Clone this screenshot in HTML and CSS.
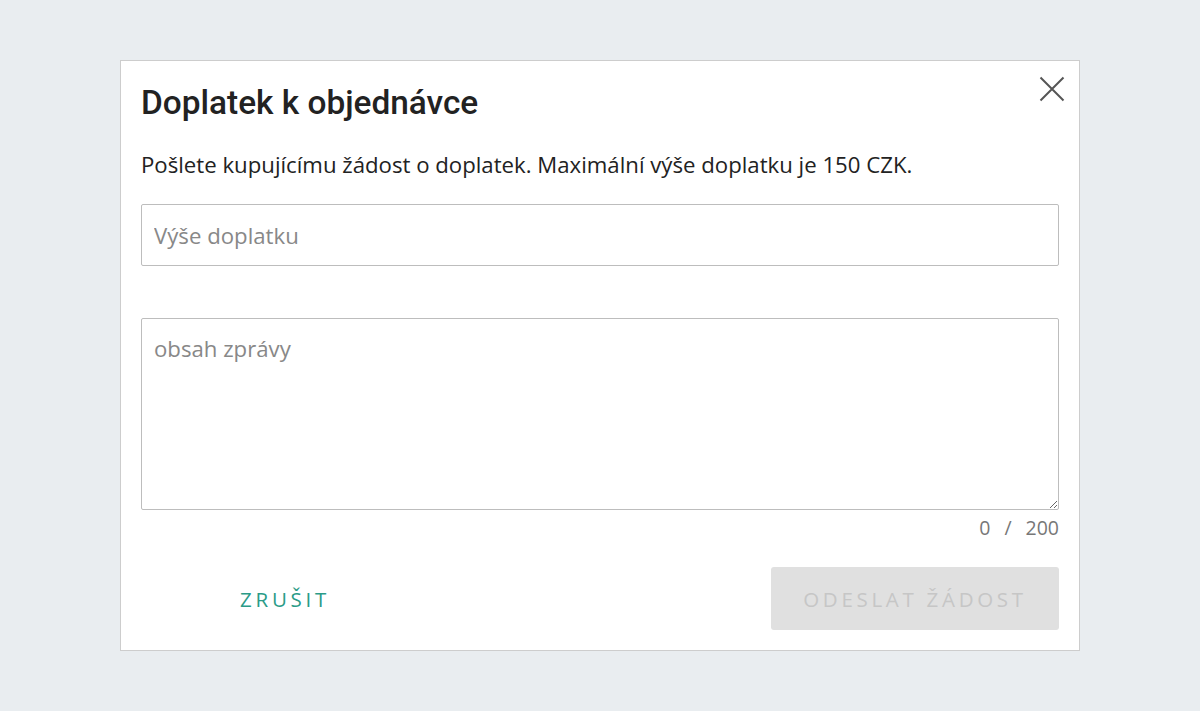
FILE: index.html
```html
<!DOCTYPE html>
<html lang="cs">
<head>
<meta charset="utf-8">
<title>Doplatek k objednávce</title>
<link rel="stylesheet" href="styles.css">
</head>
<body>
<div class="page">
  <div class="dialog">
    <button class="close" aria-label="Zavřít">
      <svg width="26" height="26" viewBox="0 0 26 26"><path d="M1.5 1.5 L24.5 24.5 M24.5 1.5 L1.5 24.5" stroke="#555" stroke-width="2" fill="none"/></svg>
    </button>
    <h1 class="title">Doplatek k objednávce</h1>
    <p class="desc">Pošlete kupujícímu žádost o doplatek. Maximální výše doplatku je 150 CZK.</p>
    <input class="field" type="text" placeholder="Výše doplatku">
    <textarea class="area" placeholder="obsah zprávy"></textarea>
    <div class="counter"><span>0</span><span>/</span><span>200</span></div>
    <div class="actions">
      <button class="btn cancel">ZRUŠIT</button>
      <button class="btn send" disabled>ODESLAT ŽÁDOST</button>
    </div>
  </div>
</div>
</body>
</html>
```
FILE: styles.css
```css
html, body {
  margin: 0;
  padding: 0;
  background: #e9edf0;
}
.page {
  width: 1200px;
  height: 711px;
  display: flex;
  justify-content: center;
  padding-top: 60px;
  box-sizing: border-box;
}
.dialog {
  position: relative;
  width: 960px;
  height: 591px;
  box-sizing: border-box;
  background: #fff;
  border: 1px solid #cdcdcd;
  padding: 24px 20px 20px 20px;
  display: flex;
  flex-direction: column;
  font-family: "Open Sans", sans-serif;
}
.close {
  position: absolute;
  top: 15px;
  right: 14px;
  width: 26px;
  height: 26px;
  padding: 0;
  border: 0;
  background: none;
  cursor: pointer;
}
.title {
  margin: 0;
  font-family: Roboto, sans-serif;
  font-weight: 500;
  font-size: 33.4px;
  line-height: 36px;
  color: #222;
}
.desc {
  margin: 29px 0 0 0;
  font-size: 22.2px;
  line-height: 30px;
  color: #222;
}
.field {
  margin-top: 24px;
  height: 62px;
  box-sizing: border-box;
  border: 1px solid #bdbdbd;
  border-radius: 2px;
  padding: 0 12px;
  font-family: "Open Sans", sans-serif;
  font-size: 22.2px;
  color: #222;
  outline: none;
}
.area {
  margin-top: 52px;
  height: 192px;
  box-sizing: border-box;
  border: 1px solid #bdbdbd;
  border-radius: 2px;
  padding: 15px 12px;
  font-family: "Open Sans", sans-serif;
  font-size: 22.2px;
  line-height: 30px;
  color: #222;
  outline: none;
  resize: vertical;
}
.field::placeholder, .area::placeholder {
  color: #888;
}
.counter {
  margin-top: 6px;
  display: flex;
  justify-content: flex-end;
  gap: 14px;
  font-size: 19.5px;
  line-height: 24px;
  color: #777;
}
.actions {
  margin-top: 27px;
  display: flex;
  justify-content: space-between;
}
.btn {
  width: 288px;
  height: 63px;
  border: 0;
  border-radius: 3px;
  font-family: "Open Sans", sans-serif;
  font-size: 20.5px;
  font-weight: 500;
  letter-spacing: 3.7px;
  cursor: pointer;
}
.cancel {
  background: transparent;
  color: #2b9b88;
}
.send {
  background: #e0e0e0;
  color: #c6c6c6;
}
```
